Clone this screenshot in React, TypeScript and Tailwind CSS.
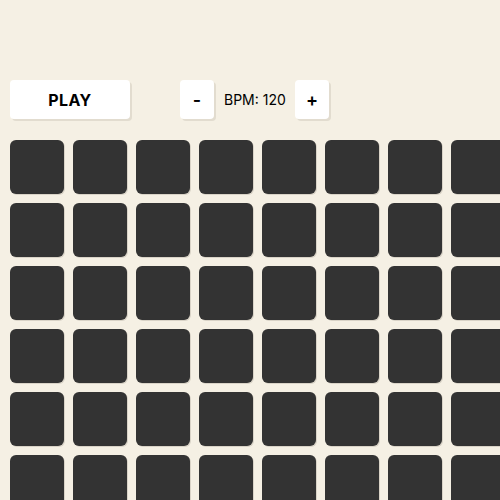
import React, { useState } from 'react';

const COLS = 16;
const ROWS = 8;

export default function App() {
  const [bpm, setBpm] = useState(120);
  const [cells, setCells] = useState<boolean[]>(Array(COLS * ROWS).fill(false));

  const toggle = (i: number) => setCells(prev => prev.map((c, j) => (j === i ? !c : c)));

  return (
    <div className="w-[500px] h-[500px] overflow-hidden bg-[#f5f0e4] pt-[80px] pl-[10px] font-['Inter',sans-serif] text-black">
      {/* Controls */}
      <div className="flex items-center h-[39px]">
        <button className="w-[120px] h-[39px] bg-white rounded-[4px] shadow-[2px_2px_0_#e2dccf] text-[16px] font-bold tracking-wide">
          PLAY
        </button>
        <button
          onClick={() => setBpm(b => b - 1)}
          className="ml-[50px] w-[34px] h-[39px] bg-white rounded-[4px] shadow-[2px_2px_0_#e2dccf] text-[18px] font-semibold"
        >
          -
        </button>
        <span className="mx-[10px] text-[14px] w-[61px] text-center whitespace-nowrap">BPM: {bpm}</span>
        <button
          onClick={() => setBpm(b => b + 1)}
          className="w-[34px] h-[39px] bg-white rounded-[4px] shadow-[2px_2px_0_#e2dccf] text-[18px] font-semibold"
        >
          +
        </button>
      </div>

      {/* Step grid */}
      <div className="mt-[21px] grid grid-cols-[repeat(16,54px)] gap-[9px] w-max">
        {cells.map((on, i) => (
          <button
            key={i}
            onClick={() => toggle(i)}
            className={`w-[54px] h-[54px] rounded-[6px] shadow-[1px_1px_0_#d9d3c7] ${on ? 'bg-[#f59e0b]' : 'bg-[#333333]'}`}
          />
        ))}
      </div>
    </div>
  );
}
